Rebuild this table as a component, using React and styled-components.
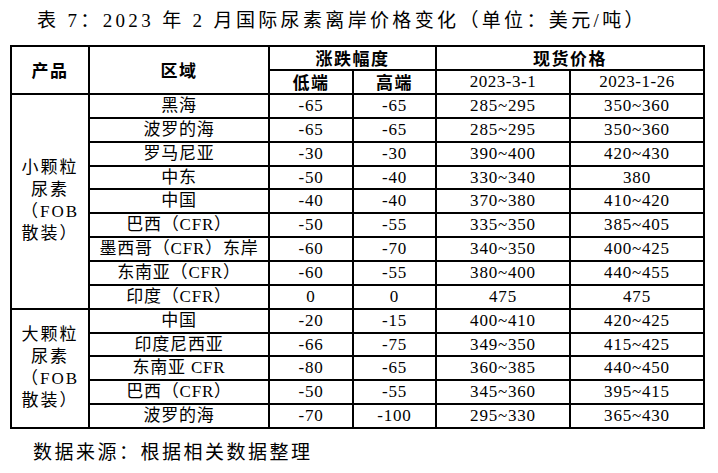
import React from 'react';
import styled, { createGlobalStyle } from 'styled-components';

const GlobalStyle = createGlobalStyle`
  body {
    margin: 0;
    background: #fff;
  }
`;

const Page = styled.div`
  width: 718px;
  height: 473px;
  font-family: "Liberation Serif", "Noto Sans CJK SC", serif;
  color: #000;
  overflow: hidden;
`;

const Title = styled.div`
  height: 45px;
  padding: 8px 0 0 37px;
  box-sizing: border-box;
  font-size: 19px;
  line-height: 26px;
  letter-spacing: 3.35px;
  white-space: nowrap;
`;

const Table = styled.table`
  margin-left: 10px;
  width: 693px;
  table-layout: fixed;
  border-collapse: collapse;
  border: 2px solid #000;
`;

const HeadCell = styled.th`
  border: 2px solid #000;
  height: 22px;
  padding: 0;
  font-family: ${({ $latin }) => ($latin ? '"Liberation Serif", serif' : '"Noto Sans CJK SC", sans-serif')};
  font-weight: ${({ $latin }) => ($latin ? 400 : 700)};
  font-size: 17px;
  letter-spacing: ${({ $latin }) => ($latin ? '0.5px' : '1.5px')};
  line-height: 14px;
  text-align: center;
  vertical-align: middle;
`;

const Cell = styled.td`
  border: 2px solid #000;
  height: 21.86px;
  padding: 0;
  font-size: 17px;
  letter-spacing: 0.8px;
  line-height: 14px;
  text-align: center;
  vertical-align: middle;
  white-space: nowrap;
`;

const GroupCell = styled(Cell)`
  letter-spacing: 2px;
  white-space: normal;
`;

const GroupLine = styled.div`
  height: 22px;
  line-height: 22px;
`;

const Source = styled.div`
  margin-top: 11px;
  padding-left: 33px;
  font-size: 19px;
  line-height: 26px;
  letter-spacing: 2.5px;
  white-space: nowrap;
`;

const colWidths = [78, 180, 84, 83, 134, 134];

const groups = [
  {
    name: ['小颗粒', '尿素', '（FOB', '散装）'],
    rows: [
      ['黑海', '-65', '-65', '285~295', '350~360'],
      ['波罗的海', '-65', '-65', '285~295', '350~360'],
      ['罗马尼亚', '-30', '-30', '390~400', '420~430'],
      ['中东', '-50', '-40', '330~340', '380'],
      ['中国', '-40', '-40', '370~380', '410~420'],
      ['巴西（CFR）', '-50', '-55', '335~350', '385~405'],
      ['墨西哥（CFR）东岸', '-60', '-70', '340~350', '400~425'],
      ['东南亚（CFR）', '-60', '-55', '380~400', '440~455'],
      ['印度（CFR）', '0', '0', '475', '475'],
    ],
  },
  {
    name: ['大颗粒', '尿素', '（FOB', '散装）'],
    rows: [
      ['中国', '-20', '-15', '400~410', '420~425'],
      ['印度尼西亚', '-66', '-75', '349~350', '415~425'],
      ['东南亚 CFR', '-80', '-65', '360~385', '440~450'],
      ['巴西（CFR）', '-50', '-55', '345~360', '395~415'],
      ['波罗的海', '-70', '-100', '295~330', '365~430'],
    ],
  },
];

const App = () => {
  return (
    <Page>
      <GlobalStyle />
      <Title>表 7：2023 年 2 月国际尿素离岸价格变化（单位：美元/吨）</Title>
      <Table>
        <colgroup>
          {colWidths.map((w, i) => (
            <col key={i} style={{ width: w }} />
          ))}
        </colgroup>
        <thead>
          <tr>
            <HeadCell rowSpan={2}>产品</HeadCell>
            <HeadCell rowSpan={2}>区域</HeadCell>
            <HeadCell colSpan={2}>涨跌幅度</HeadCell>
            <HeadCell colSpan={2}>现货价格</HeadCell>
          </tr>
          <tr>
            <HeadCell>低端</HeadCell>
            <HeadCell>高端</HeadCell>
            <HeadCell $latin>2023-3-1</HeadCell>
            <HeadCell $latin>2023-1-26</HeadCell>
          </tr>
        </thead>
        <tbody>
          {groups.map((g) =>
            g.rows.map((r, i) => (
              <tr key={g.name[0] + i}>
                {i === 0 && (
                  <GroupCell rowSpan={g.rows.length}>
                    {g.name.map((line, k) => (
                      <GroupLine key={k}>{line}</GroupLine>
                    ))}
                  </GroupCell>
                )}
                {r.map((v, j) => (
                  <Cell key={j}>{v}</Cell>
                ))}
              </tr>
            ))
          )}
        </tbody>
      </Table>
      <Source>数据来源：根据相关数据整理</Source>
    </Page>
  );
};

export default App;
